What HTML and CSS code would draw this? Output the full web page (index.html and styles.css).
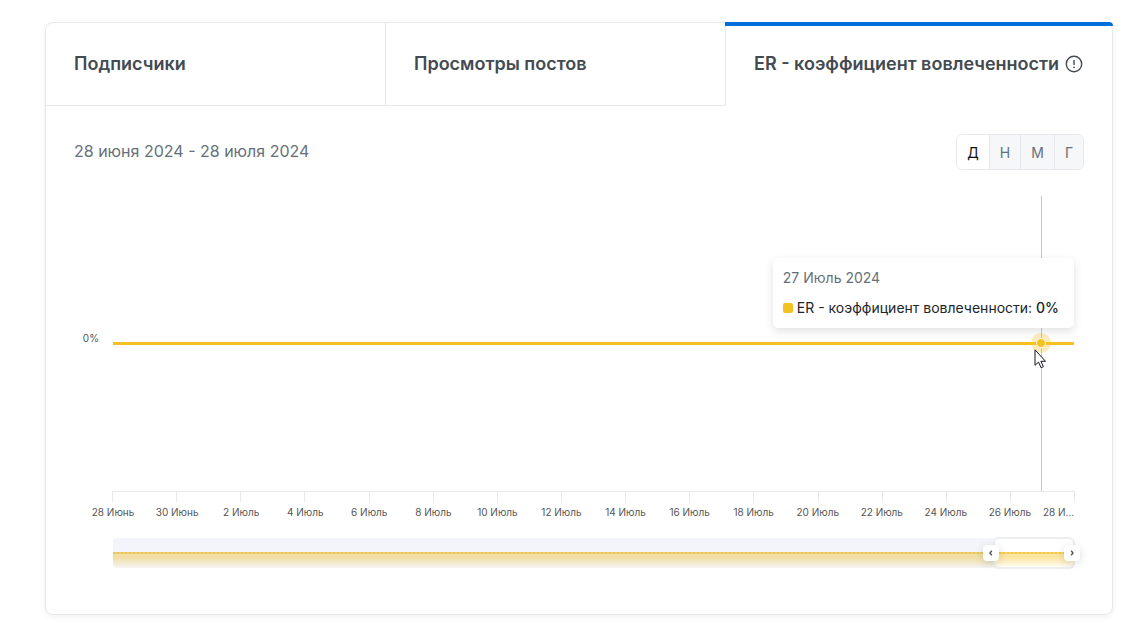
FILE: index.html
```
<!DOCTYPE html>
<html lang="ru">
<head>
<meta charset="utf-8">
<meta name="viewport" content="width=device-width, initial-scale=1">
<title>ER - коэффициент вовлеченности</title>
<link rel="stylesheet" href="styles.css">
</head>
<body>
<main class="card">
  <div class="tabs" role="tablist">
    <button class="tab" type="button" role="tab" aria-selected="false">Подписчики</button>
    <button class="tab" type="button" role="tab" aria-selected="false">Просмотры постов</button>
    <button class="tab tab-active" type="button" role="tab" aria-selected="true">ER - коэффициент вовлеченности
      <svg class="info" viewBox="0 0 18 18" aria-hidden="true"><circle cx="9" cy="9" r="7.7" fill="none" stroke="currentColor" stroke-width="1.4"/><path d="M9 5v5" fill="none" stroke="currentColor" stroke-width="1.4"/><circle cx="9" cy="12.3" r=".9" fill="currentColor"/></svg>
    </button>
  </div>
  <section class="panel">
    <header class="toolbar">
      <span class="range">28 июня 2024 - 28 июля 2024</span>
      <div class="periods" role="group" aria-label="Период">
        <button class="period period-active" type="button">Д</button>
        <button class="period" type="button">Н</button>
        <button class="period" type="button">М</button>
        <button class="period" type="button">Г</button>
      </div>
    </header>
    <div class="chart">
      <span class="y-label">0%</span>
      <div class="plot">
        <div class="crosshair"></div>
        <div class="series"></div>
        <div class="point"></div>
        <div class="tooltip" role="tooltip">
          <div class="tooltip-date">27 Июль 2024</div>
          <div class="tooltip-row"><i class="swatch"></i><span>ER - коэффициент вовлеченности: <b class="value">0%</b></span></div>
        </div>
        <svg class="cursor" viewBox="0 0 13 20" aria-hidden="true"><path d="M1 .8v15.5l3.5-3.2 2.6 5.6 2.3-1-2.5-5.4h4.6z" fill="#fff" stroke="#14141f"/></svg>
      </div>
      <div class="axis">
        <div class="ticks"><i></i><i></i><i></i><i></i><i></i><i></i><i></i><i></i><i></i><i></i><i></i><i></i><i></i><i></i><i></i></div>
        <div class="labels">
          <span>28 Июнь</span><span>30 Июнь</span><span>2 Июль</span><span>4 Июль</span><span>6 Июль</span><span>8 Июль</span><span>10 Июль</span><span>12 Июль</span><span>14 Июль</span><span>16 Июль</span><span>18 Июль</span><span>20 Июль</span><span>22 Июль</span><span>24 Июль</span><span>26 Июль</span><span class="label-last">28 И...</span>
        </div>
      </div>
      <div class="scroller">
        <div class="track"></div>
        <div class="window">
          <button class="handle handle-start" type="button" aria-label="Начало периода"><svg viewBox="0 0 16 16"><path d="M8.8 5.8L7 8l1.8 2.2"/></svg></button>
          <button class="handle handle-end" type="button" aria-label="Конец периода"><svg viewBox="0 0 16 16"><path d="M7.2 5.8L9 8l-1.8 2.2"/></svg></button>
        </div>
      </div>
    </div>
  </section>
</main>
</body>
</html>
```
FILE: styles.css
```
* { box-sizing: border-box; }
body {
  margin: 0;
  padding: 22px 17px 10px 45px;
  background: #fff;
  color: #212529;
  font-family: Inter, "Liberation Sans", sans-serif;
}
button { font: inherit; color: inherit; cursor: pointer; }
.card {
  border: 1px solid #e6e8eb;
  border-radius: 8px;
  box-shadow: 0 2px 6px rgba(0, 0, 0, .06);
}
.tabs { display: grid; grid-template-columns: 340fr 340fr 386fr; }
.tab {
  height: 83px;
  padding: 0 28px;
  border: 0;
  border-right: 1px solid #e6e8eb;
  border-bottom: 1px solid #e6e8eb;
  background: none;
  color: #434a51;
  font-size: 18px;
  font-weight: 600;
  line-height: 24px;
  text-align: left;
  white-space: nowrap;
}
.tab-active {
  position: relative;
  display: flex;
  align-items: center;
  gap: 6px;
  border-right: 0;
  border-bottom-color: transparent;
}
.tab-active::before {
  content: "";
  position: absolute;
  top: -1px;
  right: -1px;
  left: -1px;
  height: 4px;
  border-radius: 0 4px 0 0;
  background: #006fde;
}
.info { flex: none; width: 18px; height: 18px; }
.panel { padding: 28px 28px 46px; }
.toolbar { display: flex; align-items: flex-start; justify-content: space-between; }
.range { padding-top: 5px; color: #66707a; font-size: 16px; line-height: 24px; }
.periods {
  display: flex;
  overflow: hidden;
  height: 36px;
  border: 1px solid #e6e8eb;
  border-radius: 6px;
}
.period {
  padding: 0 10px;
  border: 0;
  border-left: 1px solid #e6e8eb;
  background: #f5f7f9;
  color: #66707a;
  font-size: 14px;
}
.period-active { border-left: 0; background: #fff; color: #111; }
.chart {
  display: grid;
  grid-template-columns: 25px minmax(0, 1fr);
  column-gap: 14px;
  padding: 26px 10px 0 0;
}
.y-label {
  align-self: center;
  padding-bottom: 12px;
  color: #555;
  font-size: 10px;
  line-height: 12px;
  text-align: right;
}
.plot { position: relative; height: 295px; }
.series {
  position: absolute;
  top: 146px;
  right: 0;
  left: 0;
  height: 3px;
  background: #f4c123;
}
.crosshair {
  position: absolute;
  top: 0;
  bottom: 0;
  left: calc(100% * 29 / 30 - 1px);
  width: 1px;
  background: #c4c5c6;
}
.point {
  position: absolute;
  top: 147px;
  left: calc(100% * 29 / 30 - 1px);
  width: 10px;
  height: 10px;
  margin: -5px;
  border: 1px solid #fff8dd;
  border-radius: 50%;
  background: #f4c123;
  box-shadow: 0 0 0 5px rgba(244, 193, 35, .3);
}
.cursor {
  position: absolute;
  top: 153px;
  left: calc(100% * 29 / 30 - 8px);
  width: 13px;
  height: 20px;
}
.tooltip {
  position: absolute;
  top: 62px;
  right: 0;
  padding: 10px 15px 10px 10px;
  border-radius: 5px;
  background: #fff;
  box-shadow: 0 3px 10px rgba(0, 0, 0, .12);
  font-size: 14px;
  line-height: 20px;
  white-space: nowrap;
}
.tooltip-date { margin-bottom: 10px; color: #66707a; }
.tooltip-row { display: flex; align-items: center; gap: 4px; }
.swatch { width: 10px; height: 10px; border-radius: 2px; background: #f4c123; }
.value { font-weight: 500; }
.axis { grid-column: 2; }
.ticks {
  display: flex;
  height: 11px;
  margin: 0 -1px;
  border-top: 1px solid #e6e8eb;
  border-right: 1px solid #e6e8eb;
}
.ticks i { flex: 1; border-left: 1px solid #e6e8eb; }
.labels {
  display: grid;
  grid-template-columns: repeat(16, minmax(0, 1fr));
  margin: 4px -32px 0;
  color: #555;
  font-size: 10px;
  line-height: 12px;
  text-align: center;
  white-space: nowrap;
}
.label-last { padding-left: 1px; text-align: left; }
.scroller {
  position: relative;
  grid-column: 2;
  height: 30px;
  margin-top: 20px;
}
.track {
  height: 30px;
  border-radius: 4px;
  background:
    repeating-linear-gradient(90deg, #e9c558 0 2px, #efd078 2px 4px) 0 14px / 100% 2px no-repeat,
    linear-gradient(#f1dfa5, #f1dfa5 25%, #f4f4f5) 0 16px / 100% 14px no-repeat,
    #f4f5fa;
}
.window {
  position: absolute;
  top: -1px;
  right: -1px;
  bottom: -1px;
  width: 82px;
  border: 2px solid rgba(225, 227, 232, .6);
  border-radius: 6px;
  background:
    repeating-linear-gradient(90deg, #f3c743 0 2px, #f8d76f 2px 4px) 0 13px / 100% 2px no-repeat,
    linear-gradient(#fce5a0, #fce5a0 25%, #fffdf5) 0 15px / 100% 13px no-repeat,
    #fff;
}
.handle {
  position: absolute;
  top: 6px;
  width: 16px;
  height: 16px;
  padding: 0;
  border: 0;
  border-radius: 4px;
  background: #fff;
  box-shadow: 0 2px 8px rgba(0, 0, 0, .14);
}
.handle-start { left: -12px; }
.handle-end { right: -7px; }
.handle svg { display: block; width: 16px; height: 16px; fill: none; stroke: #555; stroke-width: 1.4; }
```
